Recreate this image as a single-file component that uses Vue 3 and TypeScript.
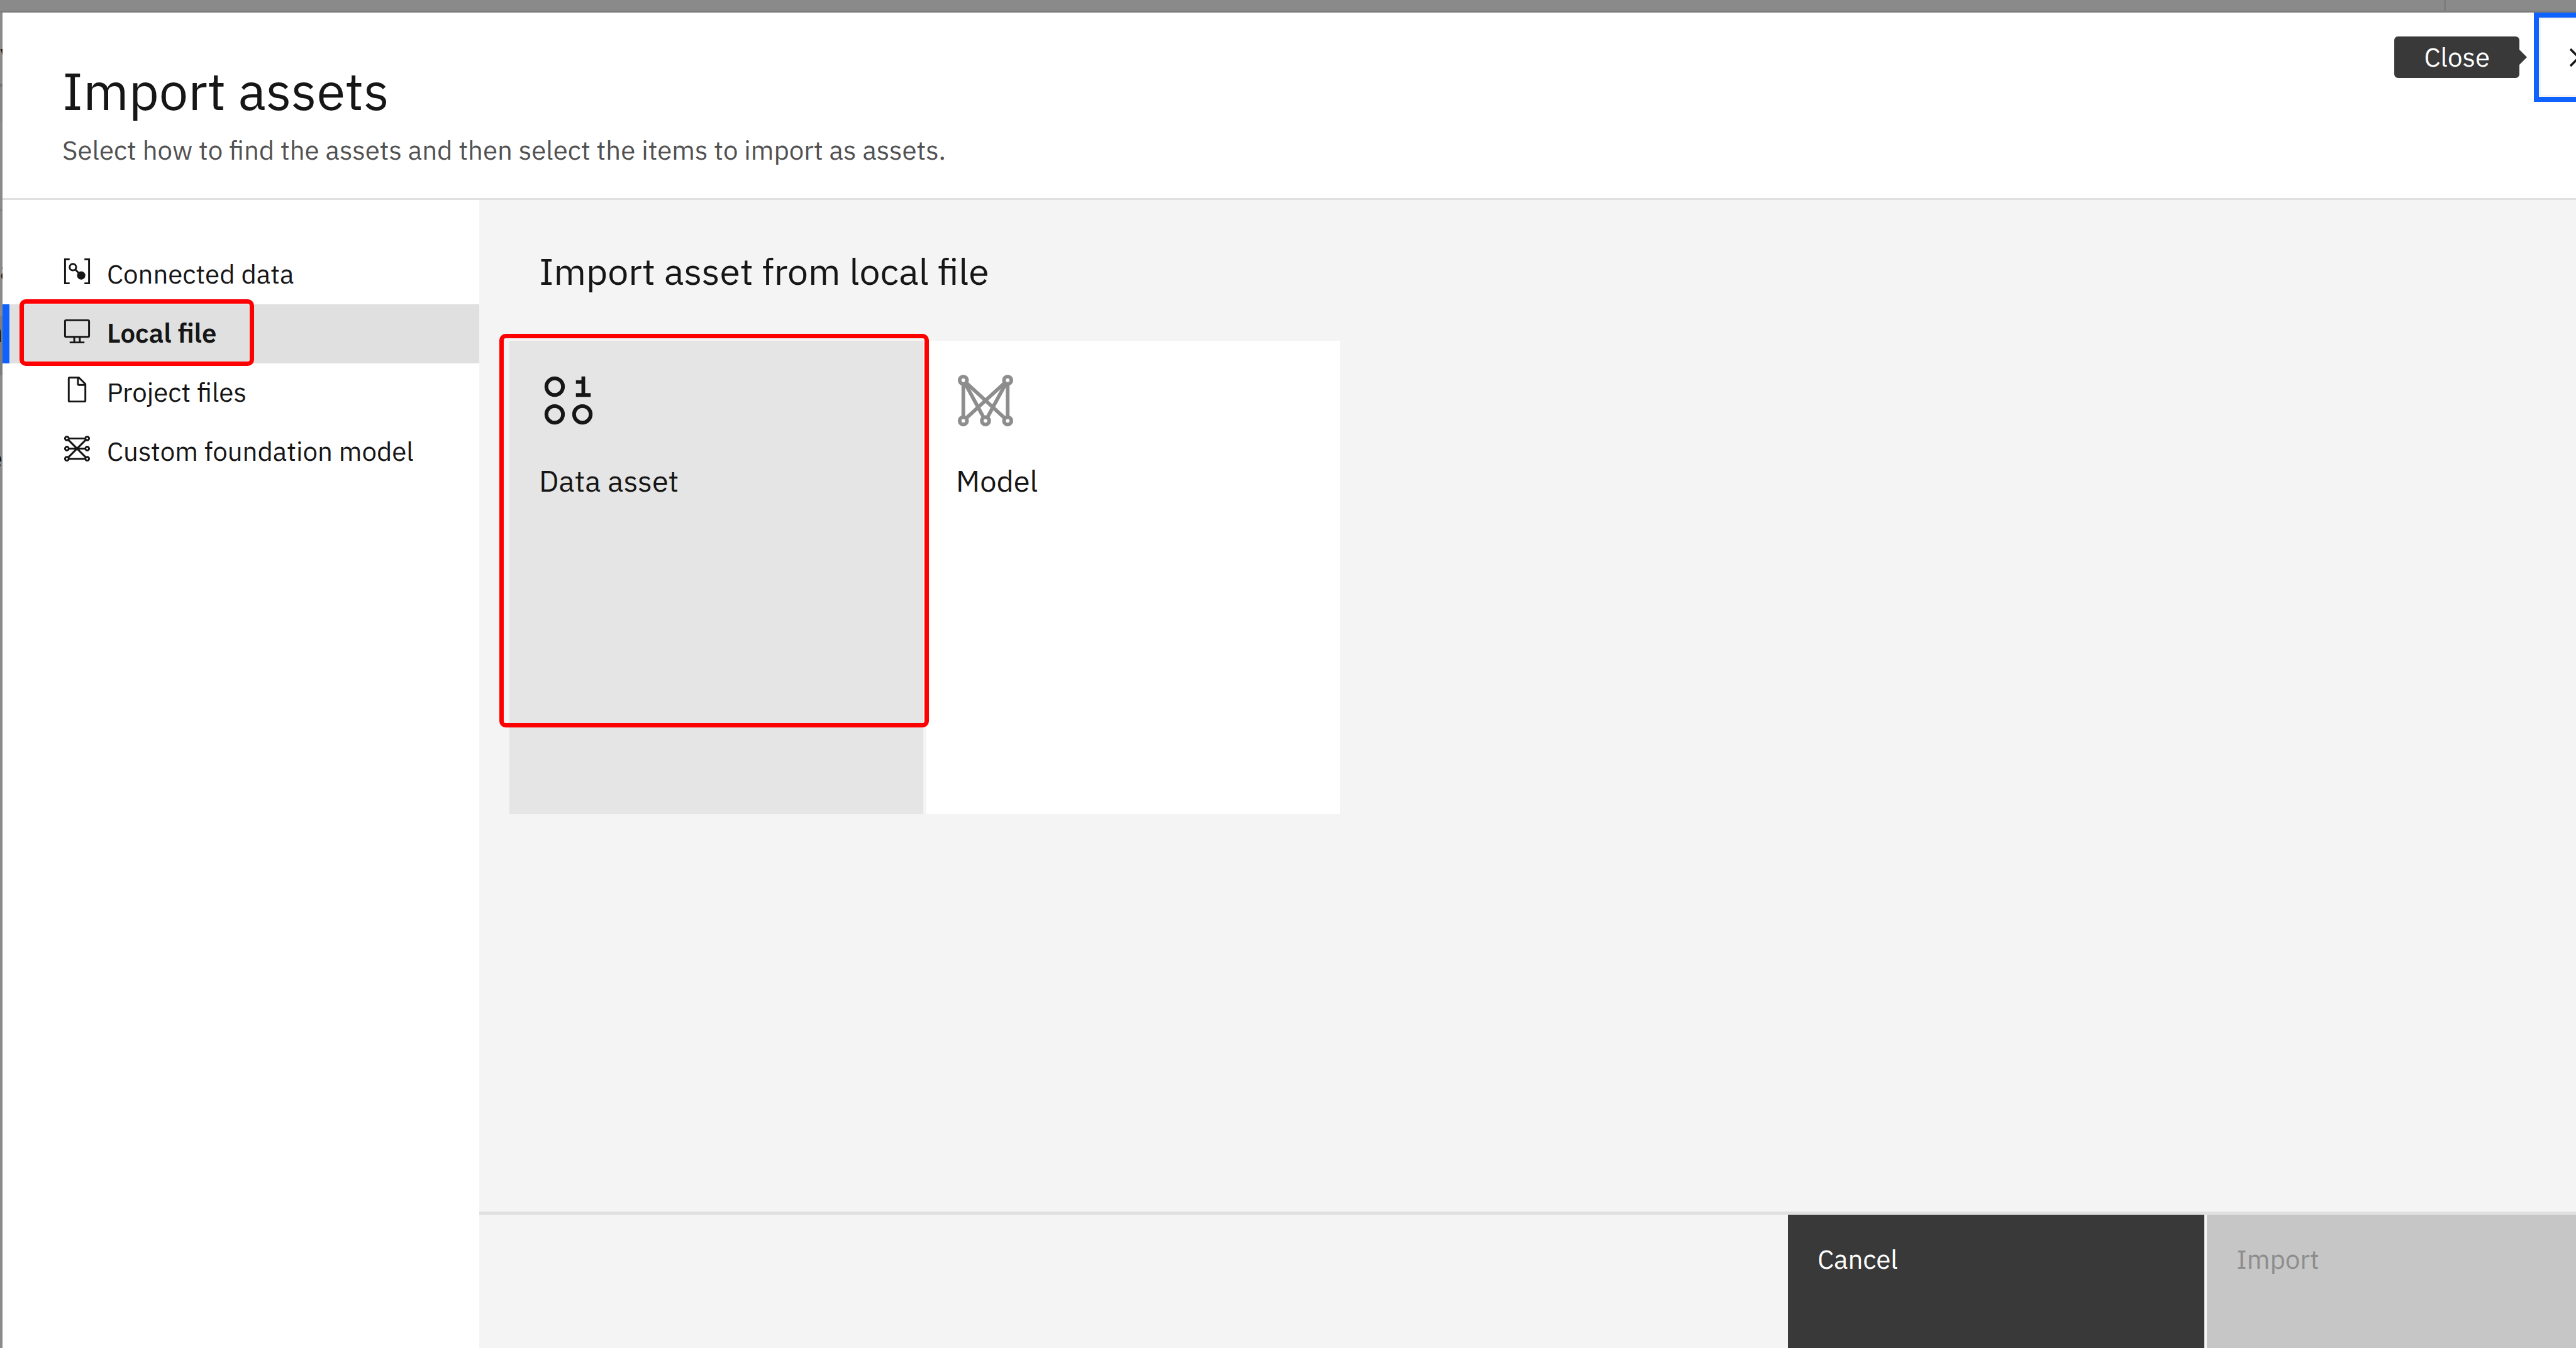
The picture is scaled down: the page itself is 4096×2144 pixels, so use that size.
<script setup lang="ts">
import { ref } from 'vue'

type Source = 'connected' | 'local' | 'project' | 'custom'

const sources: { id: Source; label: string }[] = [
  { id: 'connected', label: 'Connected data' },
  { id: 'local', label: 'Local file' },
  { id: 'project', label: 'Project files' },
  { id: 'custom', label: 'Custom foundation model' },
]

const tiles = [
  { id: 'data', label: 'Data asset' },
  { id: 'model', label: 'Model' },
]

const activeSource = ref<Source>('local')
const selectedTile = ref('data')
</script>

<template>
  <div class="page">
    <div class="page-bar"><span class="page-divider"></span></div>
    <div class="page-body">
      <div class="page-edge" aria-hidden="true">
        <div class="edge-block edge-title"><span>v</span></div>
        <div class="edge-rule thick"></div>
        <div class="edge-band"></div>
        <div class="edge-space"></div>
        <div class="edge-rule"></div>
        <div class="edge-block edge-label"><span>a</span></div>
        <div class="edge-block edge-current trailing"><b>n</b></div>
        <div class="edge-block edge-label last trailing"><span>e</span></div>
      </div>

      <section class="modal" role="dialog" aria-labelledby="modal-title">
        <header class="modal-header">
          <div class="modal-heading">
            <h1 id="modal-title">Import assets</h1>
            <p>Select how to find the assets and then select the items to import as assets.</p>
          </div>
          <span id="close-tip" class="tooltip" role="tooltip">Close</span>
          <button class="close" type="button" aria-labelledby="close-tip">
            <svg viewBox="0 0 32 32" aria-hidden="true">
              <path d="M17.4141 16 24 9.4141 22.5859 8 16 14.5859 9.4143 8 8 9.4141 14.5859 16 8 22.5859 9.4143 24 16 17.4141 22.5859 24 24 22.5859z" />
            </svg>
          </button>
        </header>

        <div class="modal-body">
          <nav class="sources" aria-label="Asset source">
            <a
              v-for="s in sources"
              :key="s.id"
              href="#"
              class="source"
              :class="{ active: s.id === activeSource }"
              @click.prevent="activeSource = s.id"
            >
              <svg viewBox="0 0 32 32" aria-hidden="true">
                <g v-if="s.id === 'connected'">
                  <path d="M8 4V2H2v28h6v-2H4V4zM24 4V2h6v28h-6v-2h4V4z" />
                  <path class="line" d="M14 14l5 5" />
                  <circle class="line" cx="11.5" cy="11.5" r="3.5" />
                  <circle cx="20.5" cy="20.5" r="4.5" />
                </g>
                <path
                  v-else-if="s.id === 'local'"
                  d="M28,4H4A2,2,0,0,0,2,6V22a2,2,0,0,0,2,2h8v4H8v2H24V28H20V24h8a2,2,0,0,0,2-2V6A2,2,0,0,0,28,4ZM18,28H14V24h4Zm10-6H4V6H28Z"
                />
                <path
                  v-else-if="s.id === 'project'"
                  d="M25.7,9.3l-7-7A.9.9,0,0,0,18,2H8A2,2,0,0,0,6,4V28a2,2,0,0,0,2,2H24a2,2,0,0,0,2-2V10A.9.9,0,0,0,25.7,9.3ZM18,4.4,23.6,10H18ZM24,28H8V4h8v6a2,2,0,0,0,2,2h6Z"
                />
                <g v-else class="line">
                  <path d="M7 5h18M7 16h18M7 27h18M6.4 6.4l19.2 19.2M25.6 6.4L6.4 25.6" />
                  <circle cx="5" cy="5" r="2" />
                  <circle cx="27" cy="5" r="2" />
                  <circle cx="5" cy="16" r="2" />
                  <circle cx="27" cy="16" r="2" />
                  <circle cx="5" cy="27" r="2" />
                  <circle cx="27" cy="27" r="2" />
                </g>
              </svg>
              <span>{{ s.label }}</span>
              <i v-if="s.id === 'local'" class="highlight"></i>
            </a>
          </nav>

          <div class="content">
            <main class="panel">
              <h2>Import asset from local file</h2>
              <div class="tiles">
                <button
                  v-for="t in tiles"
                  :key="t.id"
                  type="button"
                  class="tile"
                  :class="{ selected: t.id === selectedTile }"
                  @click="selectedTile = t.id"
                >
                  <svg v-if="t.id === 'data'" viewBox="0 0 32 32" aria-hidden="true">
                    <circle class="line" cx="8.5" cy="8.5" r="4.5" />
                    <circle class="line" cx="8.5" cy="23.5" r="4.5" />
                    <circle class="line" cx="23.5" cy="23.5" r="4.5" />
                    <path class="line" d="M20 6h4M24 3v10M20 13h8" />
                  </svg>
                  <svg v-else class="muted" viewBox="0 0 32 32" aria-hidden="true">
                    <path class="line" d="M4 5v22M28 5v22M4 5l12 22M4 5l24 22M28 5L4 27M28 5L16 27" />
                    <circle class="line node" cx="4" cy="5" r="2" />
                    <circle class="line node" cx="28" cy="5" r="2" />
                    <circle class="line node" cx="4" cy="27" r="2" />
                    <circle class="line node" cx="16" cy="27" r="2" />
                    <circle class="line node" cx="28" cy="27" r="2" />
                  </svg>
                  <span>{{ t.label }}</span>
                  <i v-if="t.id === 'data'" class="highlight"></i>
                </button>
              </div>
            </main>
            <footer class="actions">
              <button type="button" class="cancel">Cancel</button>
              <button type="button" class="import" disabled>Import</button>
            </footer>
          </div>
        </div>
      </section>
    </div>
  </div>
</template>

<style>
body {
  overflow: hidden;
}
</style>

<style scoped>
* {
  box-sizing: border-box;
}

.page {
  display: flex;
  flex-direction: column;
  height: 100vh;
  overflow: hidden;
  background: #8a8a8a;
  color: #161616;
  font-family: "IBM Plex Sans", Roboto, "Liberation Sans", sans-serif;
  font-size: 42px;
}

h1,
h2,
p {
  margin: 0;
  font-weight: 400;
}

button {
  border: 0;
  border-radius: 0;
  margin: 0;
  font: inherit;
  color: inherit;
  text-align: left;
}

svg {
  display: block;
  flex: none;
  fill: currentColor;
}

.line {
  fill: none;
  stroke: currentColor;
  stroke-width: 2;
}

/* dimmed page behind the dialog */
.page-bar {
  display: flex;
  justify-content: flex-end;
  flex: none;
  height: 20px;
  padding-right: 207px;
  border-bottom: 3px solid #7d7d7d;
}

.page-divider {
  width: 3px;
  background: #7d7d7d;
}

.page-body {
  display: flex;
  flex: 1;
  min-height: 0;
}

.page-edge {
  display: flex;
  flex-direction: column;
  flex: none;
  width: 4px;
  overflow: hidden;
}

.edge-block {
  display: flex;
  flex: none;
  align-items: center;
  overflow: hidden;
}

.edge-block.trailing {
  justify-content: flex-end;
}

.edge-title {
  height: 113px;
  padding-top: 16px;
}

.edge-label {
  height: 168px;
  padding-top: 20px;
}

.edge-label.last {
  padding-top: 94px;
}

.edge-current {
  height: 94px;
  padding-bottom: 44px;
  background: #7d7d7d;
}

.edge-band {
  flex: none;
  height: 54px;
  background: #848484;
}

.edge-space {
  flex: none;
  height: 140px;
}

.edge-rule {
  flex: none;
  height: 3px;
  background: #7d7d7d;
}

.edge-rule.thick {
  height: 5px;
  background: #747474;
}

/* dialog */
.modal {
  display: flex;
  flex: 1;
  flex-direction: column;
  margin-right: -75px;
  background: #fff;
}

.modal-header {
  display: flex;
  flex: none;
  align-items: flex-start;
  height: 298px;
  border-bottom: 3px solid #e0e0e0;
}

.modal-heading {
  flex: 1;
  padding: 71px 0 0 95px;
}

.modal-heading h1 {
  font-size: 83px;
  line-height: 106px;
}

.modal-heading p {
  margin-top: 12px;
  line-height: 60px;
  color: #525252;
}

.tooltip {
  position: relative;
  margin: 38px 23px 0 0;
  padding: 0 47px;
  border-radius: 6px;
  background: #393939;
  color: #fff;
  line-height: 66px;
}

.tooltip::after {
  content: "";
  position: absolute;
  top: 21px;
  left: 100%;
  border: 12px solid transparent;
  border-right: 0;
  border-left-color: #393939;
}

.close {
  display: grid;
  place-items: center;
  width: 142px;
  height: 142px;
  padding: 0;
  border: 8px solid #0f62fe;
  background: #fff;
  box-shadow: inset 0 0 0 3px #f4f4f4;
}

.close svg {
  width: 59px;
  height: 59px;
}

.modal-body {
  display: flex;
  flex: 1;
  min-height: 0;
}

.sources {
  flex: none;
  width: 758px;
  padding-top: 72px;
}

.source {
  position: relative;
  display: flex;
  align-items: center;
  gap: 24px;
  height: 94px;
  padding-left: 95px;
  color: inherit;
  text-decoration: none;
}

.source svg {
  width: 47px;
  height: 47px;
  margin-bottom: 12px;
}

.source span {
  padding-bottom: 4px;
}

.source.active {
  background: #e0e0e0;
  box-shadow: inset 11px 0 #0f62fe;
  font-weight: 600;
}

.highlight {
  position: absolute;
  border: 7px solid #f00;
  border-radius: 10px;
  pointer-events: none;
}

.source .highlight {
  top: -8px;
  left: 27px;
  width: 373px;
  height: 106px;
}

.content {
  display: flex;
  flex: 1;
  flex-direction: column;
  background: #f4f4f4;
}

.panel {
  flex: 1;
  padding: 75px 48px 0;
}

.panel h2 {
  padding-left: 47px;
  font-size: 59px;
  line-height: 76px;
}

.tiles {
  display: flex;
  gap: 5px;
  margin-top: 73px;
}

.tile {
  position: relative;
  display: flex;
  flex-direction: column;
  align-items: flex-start;
  width: 658px;
  height: 753px;
  padding: 48px 47px;
  background: #fff;
  font-size: 47px;
  line-height: 64px;
}

.tile.selected {
  z-index: 1;
  background: #e5e5e5;
}

.tile svg {
  width: 94px;
  height: 94px;
  margin-bottom: 49px;
}

.tile .muted {
  color: #8d8d8d;
}

.tile .node {
  fill: #fff;
}

.tile .highlight {
  top: -11px;
  left: -16px;
  width: 683px;
  height: 626px;
}

.actions {
  display: flex;
  flex: none;
  justify-content: flex-end;
  gap: 4px;
  height: 217px;
  border-top: 5px solid #e0e0e0;
}

.actions button {
  display: flex;
  align-items: flex-start;
  width: 662px;
  padding: 43px 47px;
  line-height: 56px;
}

.cancel {
  background: #393939;
  color: #fff;
}

.import {
  background: #c6c6c6;
  color: #8d8d8d;
}
</style>
